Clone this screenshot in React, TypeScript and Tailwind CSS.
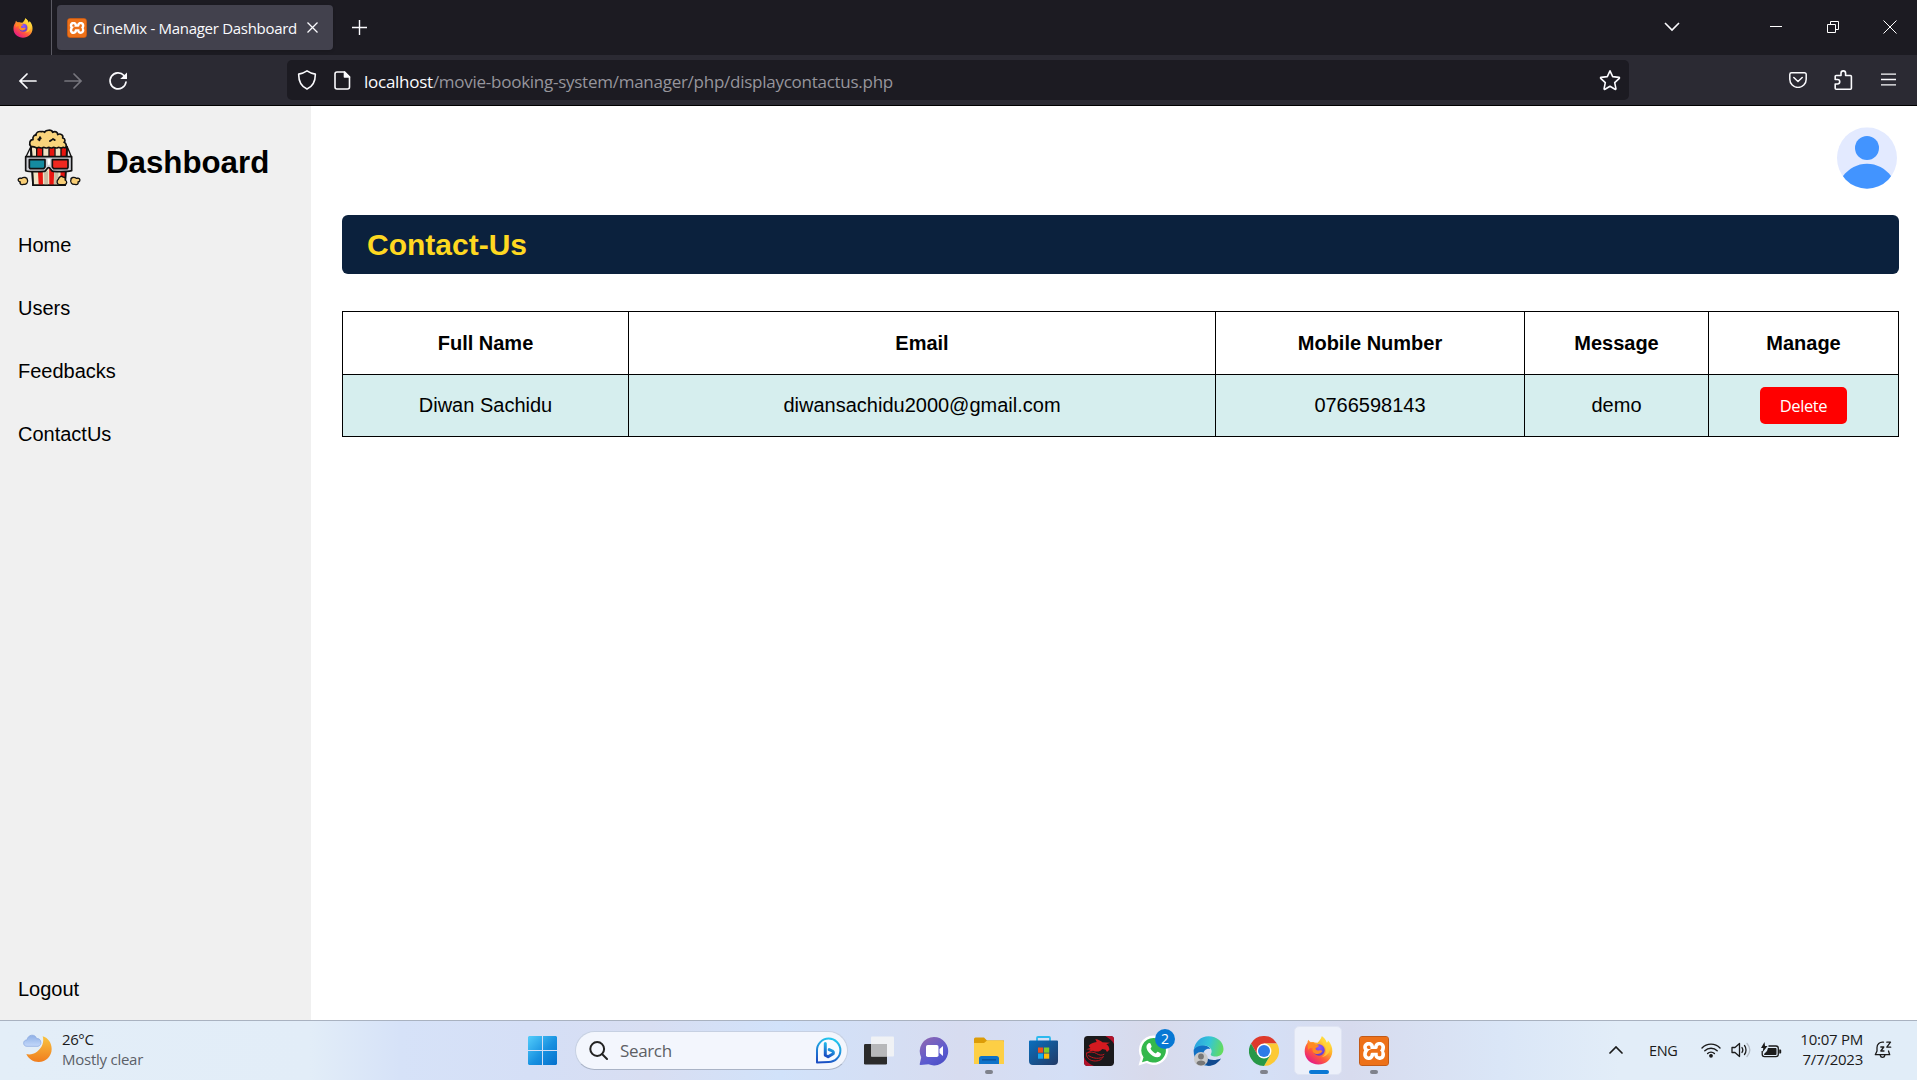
import type { ReactNode } from "react";
import { SiXampp } from "react-icons/si";

const UI = "font-['Open_Sans','Noto_Sans',sans-serif]";

function FirefoxIcon({ size, id }: { size: number; id: string }) {
  return (
    <svg width={size} height={size} viewBox="0 0 30 30" className="block shrink-0">
      <defs>
        <linearGradient id={id} x1="0.85" y1="0.05" x2="0.2" y2="0.95">
          <stop offset="0" stopColor="#fff44f" />
          <stop offset="0.35" stopColor="#ffb32b" />
          <stop offset="0.65" stopColor="#ff5a3c" />
          <stop offset="1" stopColor="#e5158a" />
        </linearGradient>
        <radialGradient id={id + "c"} cx="0.5" cy="0.3" r="0.7">
          <stop offset="0" stopColor="#9059ff" />
          <stop offset="1" stopColor="#5b3bd0" />
        </radialGradient>
      </defs>
      <path
        fill={`url(#${id})`}
        d="M18.500.3c2.500 2 4.500 4 5 6.700 1-.5 1.200-1.500 1.200-2.500C28 8 29.500 12 29.300 16 29 24 22.500 29.500 15 29.500S.7 24 .7 16C.7 12.500 1.600 9.500 3.600 7c0-1 .3-2 1-3 .6 1.200 1.400 2 2.600 2.500 1.300-.3 2.700-.2 3.800.2L14 7C15.500 5.500 17.500 3.500 18.500.3z"
      />
      <circle cx="15.500" cy="14.500" r="6" fill={`url(#${id}c)`} />
      <path fill="#ff8a24" d="M4 9c3-3 7-2 8 0l3.500.7c-.3 1.500-3 2-3.500 3-.2 1.500 1 2.500 3 2.300 2-.3 3-.4 4 .4-1 2-3 3-5 3.200-4 .2-6-3-5-6.500C6 12 5 13 4 15z" />
      <path fill="#ffd53a" fillOpacity="0.75" d="M18.500.3c-1.500 4.700 1.500 7.700 3.500 10.700 2 4 0 9-4 11 6-1 9-5 9-10 0-2-1-4-2.300-5.500 0 1-.4 1.800-1.200 2.200C23 5 22 3 18.500.3z" />
    </svg>
  );
}

function XamppIcon({ size }: { size: number }) {
  return (
    <span
      className="relative flex shrink-0 items-center justify-center overflow-hidden rounded-[3px] border border-[#c35a17] bg-[linear-gradient(#ec7a2e_0_18%,#fff_18%_82%,#ee6f18_82%)]"
      style={{ width: size, height: size }}
    >
      <SiXampp size={size} className="shrink-0 text-[#ed7119]" />
    </span>
  );
}

function Popcorn() {
  return (
    <svg width="64" height="57" viewBox="52 87 192 171" className="-ml-px block shrink-0">
      <g stroke="#111" strokeWidth="5" strokeLinejoin="round" strokeLinecap="round">
        <path fill="#efe2c4" d="M94 140h108l-6 116h-96z" />
        <path stroke="none" fill="#e8150f" d="M111 142h17l2 112h-13zM148 142h18l-4 112h-13zM184 142h16l-5 112h-13z" />
        <path fill="#c9bda3" stroke="none" d="M133 214h12v40h-11zM164 214h12v40h-13z" />
        <path fill="none" d="M94 140l6 116h96l6-116" />
        <path
          fill="#f9d47c"
          d="M94 140c-8-8-3-22 6-21-2-10 5-15 9-13-1-9 8-13 16-11 5-1 8-1 10 2 2-8 22-9 24 0 6-5 16-1 15 7 8-5 18 1 15 10 10 2 7 11 4 13 9 3 7 12 5 16-4 2-7-4-10 0-5 4-9-4-14 0-5 4-10-4-15 0-5 4-10-4-15 0-5 4-10-4-15 0-5 4-10-4-15 0-4 4-8-6-20-3z"
        />
        <path fill="none" d="M94 143v25M111 143v25M129 143v25M148 143v25M166 143v25M184 143v25M201 143v25M92 143l-13 27M204 143l11 27" strokeWidth="4" />
        <path fill="none" strokeWidth="6" d="M116 118l7-3M121 112l-2 9M151 123l5-3M160 117l5 3" />
        <path fill="#cfd0d6" d="M78 170h138v42c-16 4-36 3-56 2-6 0-7-11-13-11s-7 11-13 11c-20 1-44 2-56-2z" />
        <path fill="#158ba0" d="M89 179h47v22l-4 5H91l-2-4z" />
        <path fill="#ef2820" d="M158 179h47v23l-2 4h-41l-4-5z" />
        <path fill="#fff" stroke="none" d="M143 176h9l-2 18h-5z" />
        <path fill="#f9cf77" strokeWidth="4" d="M57 236c4-4 7 0 9-1 6-5 17-3 17 4 4 7-3 16-12 14-8 3-12-3-9-7-6-1-8-6-5-10zM239 236c-4-4-7 0-9-1-6-5-17-3-16 4-4 7 3 16 12 14 8 3 11-3 9-7 6-1 7-6 4-10zM176 238c2-7 9-12 14-7 7 0 8 7 6 9 8 4 6 12-1 14h-16c-9-2-8-12-3-16z" />
      </g>
    </svg>
  );
}

function WindowTabs() {
  return (
    <div className="flex h-[55px] bg-[#1c1b22] text-[#fbfbfe]">
      <div className="flex w-[52px] items-center border-r border-[#5b5a63] pl-[13px]">
        <FirefoxIcon size={20} id="ffTab" />
      </div>
      <div className="ml-[5px] mt-[5px] flex h-[45px] w-[276px] items-center rounded-[4px] bg-[#42414d] pl-[10px] shadow">
        <XamppIcon size={20} />
        <span className="ml-[6px] mt-px w-[205px] whitespace-nowrap text-[15px] tracking-[-0.3px]">CineMix - Manager Dashboard</span>
        <svg width="11" height="11" viewBox="0 0 11 11" className="ml-[9px]" fill="none" stroke="#fbfbfe" strokeWidth="1.300">
          <path d="M.5.5l10 10M10.500.5l-10 10" />
        </svg>
      </div>
      <svg width="15" height="15" viewBox="0 0 15 15" className="ml-[19px] mt-[20px]" fill="none" stroke="#fbfbfe" strokeWidth="1.400">
        <path d="M7.500 0v15M0 7.500h15" />
      </svg>
      <div className="mr-[20px] flex flex-1 items-start justify-end pt-[20px]">
        <svg width="16" height="10" viewBox="0 0 16 10" className="mt-[2px]" fill="none" stroke="#fbfbfe" strokeWidth="1.600">
          <path d="M1 1l7 7 7-7" />
        </svg>
        <svg width="12" height="2" viewBox="0 0 12 2" className="ml-[90px] mt-[6px]">
          <path fill="#fff" d="M0 0h12v1H0z" />
        </svg>
        <svg width="13" height="13" viewBox="0 0 13 13" className="ml-[45px] mt-[1px]" fill="none" stroke="#fff">
          <path d="M.5 3.500h8v8h-8zM3.500 3.500v-3h8v8h-3" />
        </svg>
        <svg width="14" height="14" viewBox="0 0 14 14" className="ml-[43px]" fill="none" stroke="#fff">
          <path d="M.5.5l13 13M13.500.5l-13 13" />
        </svg>
      </div>
    </div>
  );
}

function Toolbar() {
  return (
    <div className="flex h-[51px] items-start border-b border-black bg-[#2b2a33] text-[#fbfbfe]">
      <svg width="110" height="20" viewBox="0 0 110 20" className="ml-[18px] mt-[16px]" fill="none" strokeWidth="1.700" strokeLinecap="round">
        <path stroke="#fbfbfe" d="M2 10h16M9 3l-7 7 7 7" />
        <path stroke="#77767e" d="M47 10h16M56 3l7 7-7 7" />
        <path stroke="#fbfbfe" d="M106 4.500A8 8 0 1 0 108 11" />
        <path fill="#fbfbfe" stroke="none" d="M109 1.500v6.500h-6.800z" />
      </svg>
      <div className="ml-[159px] mt-[5px] flex h-[40px] w-[1342px] items-center rounded-[5px] bg-[#1c1b22]">
        <svg width="20" height="20" viewBox="0 0 20 20" className="ml-[10px]" fill="none" stroke="#fbfbfe" strokeWidth="1.600" strokeLinejoin="round">
          <path d="M10 .9c2.500 1.700 5 2.700 8.300 3.200C18.500 11.500 16 16.500 10 19.100 4 16.500 1.500 11.500 1.700 4.100 5 3.600 7.500 2.600 10 .9z" />
        </svg>
        <svg width="17" height="19" viewBox="0 0 17 19" className="ml-[17px]" fill="none" stroke="#fbfbfe" strokeWidth="1.600" strokeLinejoin="round">
          <path d="M3 1h7.500L15.500 6v10a2 2 0 0 1-2 2H3a2 2 0 0 1-2-2V3a2 2 0 0 1 2-2z" />
          <path fill="#fbfbfe" d="M10.500 1v5h5z" />
        </svg>
        <span className="ml-[13px] mt-[3px] flex-1 whitespace-nowrap text-[17px] tracking-[-0.26px] text-[#96959c]">
          <span className="text-[#fbfbfe]">localhost</span>/movie-booking-system/manager/php/displaycontactus.php
        </span>
        <svg width="22" height="22" viewBox="0 0 22 22" className="mr-[8px]" fill="none" stroke="#fbfbfe" strokeWidth="1.600" strokeLinejoin="round">
          <path d="M11 1.800l2.700 5.800 6.300.8c.5.100.6.500.3.900l-4.600 4.300 1.200 6.100c0 .6-.4.800-.9.600L11 17.200l-5 3.100c-.5.200-.9 0-.9-.6l1.200-6.100L1.700 9.300c-.3-.4-.2-.8.3-.9l6.300-.8z" />
        </svg>
      </div>
      <div className="flex flex-1 items-start justify-end pr-[21px] pt-[15px]">
        <svg width="18" height="16" viewBox="0 0 18 16" className="mt-[2px]" fill="none" stroke="#fbfbfe" strokeWidth="1.500" strokeLinecap="round" strokeLinejoin="round">
          <path d="M2.500.8h13A1.700 1.700 0 0 1 17.200 2.500v4.700a8.200 8.200 0 0 1-16.400 0V2.500A1.700 1.700 0 0 1 2.500.8zM4.800 5.500L9 9.500l4.200-4" />
        </svg>
        <svg width="19" height="20" viewBox="0 0 19 20" className="ml-[27px]" fill="none" stroke="#fbfbfe" strokeWidth="1.600" strokeLinejoin="round">
          <path d="M7 5.500V3.200a2.300 2.300 0 0 1 4.600 0v2.300h4.800a1 1 0 0 1 1 1v11.700a1 1 0 0 1-1 1H2.200a1 1 0 0 1-1-1V14h2.300a2.200 2.200 0 0 0 0-4.500H1.200V6.500a1 1 0 0 1 1-1z" />
        </svg>
        <svg width="15" height="13" viewBox="0 0 15 13" className="ml-[28px] mt-[3px]" stroke="#fbfbfe" strokeWidth="1.300">
          <path d="M0 1.200h15M0 6.500h15M0 11.800h15" />
        </svg>
      </div>
    </div>
  );
}

function Sidebar() {
  return (
    <aside className="flex w-[311px] shrink-0 flex-col bg-[#f0f0f0] pl-[18px] text-[20px] leading-[23px] text-black">
      <div className="flex h-[108px] pt-[23px]">
        <Popcorn />
        <h1 className="ml-[25px] mt-[16px] text-[31.250px] font-bold leading-[36px]">Dashboard</h1>
      </div>
      <nav className="mt-[20px] flex flex-1 flex-col gap-[40px]">
        <a>Home</a>
        <a>Users</a>
        <a>Feedbacks</a>
        <a>ContactUs</a>
      </nav>
      <a className="mb-[19px]">Logout</a>
    </aside>
  );
}

function Avatar() {
  return (
    <svg width="60" height="62" viewBox="831 380 180 184" className="ml-auto mr-[20px] mt-[21px] block">
      <defs>
        <clipPath id="avatarClip">
          <ellipse cx="921" cy="472" rx="90" ry="92" />
        </clipPath>
      </defs>
      <g clipPath="url(#avatarClip)">
        <path fill="#e3eaff" d="M831 380h180v184H831z" />
        <circle cx="921" cy="442" r="36" fill="#4294ff" />
        <path fill="#4294ff" d="M849 526c18-23 43-37 72-37s55 14 72 37v50H849z" />
      </g>
    </svg>
  );
}

function Content() {
  return (
    <main className="flex-1 bg-white">
      <Avatar />
      <h2 className="ml-[31px] mr-[18px] mt-[26px] h-[59px] rounded-[6px] bg-[#0b213d] pl-[25px] text-[30px] font-bold leading-[59px] text-[#fed821]">Contact-Us</h2>
      <table className="ml-[31px] mt-[37px] w-[1557px] table-fixed border-collapse text-center text-[20px] leading-[23px] text-black">
        <colgroup>
          <col className="w-[286px]" />
          <col className="w-[587px]" />
          <col className="w-[309px]" />
          <col className="w-[184px]" />
          <col className="w-[190px]" />
        </colgroup>
        <thead>
          <tr className="h-[63px]">
            {["Full Name", "Email", "Mobile Number", "Message", "Manage"].map((h) => (
              <th key={h} className="border border-black font-bold">{h}</th>
            ))}
          </tr>
        </thead>
        <tbody>
          <tr className="h-[62px] bg-[#d6eeee]">
            {["Diwan Sachidu", "diwansachidu2000@gmail.com", "0766598143", "demo"].map((c) => (
              <td key={c} className="border border-black">{c}</td>
            ))}
            <td className="border border-black">
              <button className={`${UI} mx-auto flex h-[37px] w-[87px] items-center justify-center rounded-[5px] bg-[#ff0000] pb-px text-[16.500px] tracking-[-0.4px] text-white`}>
                Delete
              </button>
            </td>
          </tr>
        </tbody>
      </table>
    </main>
  );
}

function Slot({ children, running }: { children: ReactNode; running?: boolean }) {
  return (
    <div className="relative flex h-[59px] w-[55px] shrink-0 items-center justify-center">
      {children}
      {running && <span className="absolute bottom-[6px] h-[4px] w-[8px] rounded-full bg-[#7f828c]" />}
    </div>
  );
}

function Weather() {
  return (
    <div className="flex w-[528px] self-stretch pl-[23px]">
      <svg width="29" height="28" viewBox="68 220 87 84" className="mt-[13px]">
        <defs>
          <linearGradient id="moon" x1="0" y1="0" x2="0" y2="1">
            <stop offset="0" stopColor="#f9c440" />
            <stop offset="1" stopColor="#f07d1e" />
          </linearGradient>
          <linearGradient id="cloud" x1="0" y1="0" x2="0" y2="1">
            <stop offset="0" stopColor="#8fb0e6" />
            <stop offset="1" stopColor="#c3d8fa" />
          </linearGradient>
        </defs>
        <path fill="url(#moon)" d="M127 227c17 5 27 20 27 38 0 22-17 39-39 39-17 0-31-10-37-24 9 3 21 1 32-7 16-12 22-30 17-46z" />
        <path fill="url(#cloud)" stroke="#85a5de" strokeWidth="2" d="M80 257c-14 0-13-20 0-19 2-17 25-20 29-4 14-3 18 20 4 23z" />
      </svg>
      <div className="ml-[10px] mt-[8px] text-[15px] leading-[20px] text-[#1b1b1b]">
        <div className="tracking-[-0.4px]">26°C</div>
        <div className="whitespace-nowrap tracking-[-0.25px] text-[#5b6068]">Mostly clear</div>
      </div>
    </div>
  );
}

function SearchPill() {
  return (
    <div className="ml-[18px] flex h-[39px] w-[273px] items-center rounded-full border border-[#c6d0e2] border-b-[#a9b3c6] bg-[#f3f6fd]">
      <svg width="19" height="19" viewBox="0 0 19 19" className="ml-[13px]" fill="none" stroke="#222" strokeWidth="2" strokeLinecap="round">
        <circle cx="8.200" cy="8" r="6.900" />
        <path d="M13 13l5 5" />
      </svg>
      <span className="ml-[12px] flex-1 text-[17px] tracking-[-0.35px] text-[#5d5f64]">Search</span>
      <svg width="27" height="27" viewBox="0 0 27 27" className="mr-[5px]" fill="none">
        <defs>
          <linearGradient id="bing" x1="0.600" y1="0" x2="0.300" y2="1">
            <stop offset="0" stopColor="#22c7ee" />
            <stop offset="1" stopColor="#1b4fc4" />
          </linearGradient>
        </defs>
        <path fill="#f8fbff" stroke="url(#bing)" strokeWidth="2" strokeLinejoin="round" d="M2 25.500V13.500A11.700 11.700 0 1 1 13.700 25z" />
        <path stroke="url(#bing)" strokeWidth="3" strokeLinejoin="round" strokeLinecap="round" d="M10.300 6.500v11.800l2.800 1.500 5-3c.7-1 .2-2.200-.7-2.800l-3.200-1.400" />
      </svg>
    </div>
  );
}

function TaskIcons() {
  return (
    <div className="ml-[3px] flex">
      <Slot>
        <svg width="31" height="29" viewBox="0 0 31 29" className="block">
          <rect x="1" y="8" width="23" height="20.500" rx="1.300" fill="#2b2b2b" />
          <rect x="8" y=".5" width="23" height="20" rx="1" fill="#f1f2f4" fillOpacity=".95" />
          <path fill="#b7b8ba" d="M8 8h16v12.500H8z" />
        </svg>
      </Slot>
      <Slot>
        <svg width="30" height="30" viewBox="0 0 30 30">
          <defs>
            <linearGradient id="chat" x1="0" y1="0" x2=".7" y2="1">
              <stop offset="0" stopColor="#9468ae" />
              <stop offset=".7" stopColor="#5b5bd0" />
              <stop offset="1" stopColor="#4d4fc6" />
            </linearGradient>
          </defs>
          <path fill="url(#chat)" d="M15 1a14.200 14.200 0 1 1-5.500 27.300L1.500 29c-.8 0-1-.5-.8-1l1.500-6.500A14.200 14.200 0 0 1 15 1z" />
          <rect x="7" y="9" width="12.500" height="12" rx="1.800" fill="#fff" />
          <path fill="#fff" d="M20.500 13l3.500-3v10l-3.500-3z" />
        </svg>
      </Slot>
      <Slot running>
        <svg width="30" height="28" viewBox="0 0 30 28">
          <path fill="#dc9c08" d="M0 2a1.500 1.500 0 0 1 1.500-1.500H10L13 3.500h17V10H0z" />
          <path fill="#fdcf45" d="M0 6h10l3-2.500h15.500A1.500 1.500 0 0 1 30 5v22H0z" />
          <path fill="#0d72c9" d="M5 27v-5.500A2.500 2.500 0 0 1 7.500 19h15a2.500 2.500 0 0 1 2.500 2.500V27z" />
          <path fill="#0a4f96" d="M8 22.200h14v1.300H8z" />
        </svg>
      </Slot>
      <Slot>
        <svg width="29" height="29" viewBox="0 0 29 29">
          <defs>
            <linearGradient id="store" x1="0" y1="0" x2="1" y2="1">
              <stop offset="0" stopColor="#0a6fbe" />
              <stop offset="1" stopColor="#223a66" />
            </linearGradient>
          </defs>
          <path fill="none" stroke="#2cb9ee" strokeWidth="1.800" d="M8 6V2a1 1 0 0 1 1-1h11a1 1 0 0 1 1 1v4" />
          <path fill="url(#store)" d="M0 5.500a1 1 0 0 1 1-1h27a1 1 0 0 1 1 1V25a4 4 0 0 1-4 4H4a4 4 0 0 1-4-4z" />
          <path fill="#f1511b" d="M9 11.500h5.200v5.200H9z" />
          <path fill="#80cc28" d="M15 11.500h5.200v5.200H15z" />
          <path fill="#16a9ee" d="M9 17.500h5.200v5.200H9z" />
          <path fill="#fbbc09" d="M15 17.500h5.200v5.200H15z" />
        </svg>
      </Slot>
      <Slot>
        <svg width="30" height="30" viewBox="372 75 90 90">
          <rect x="372" y="75" width="90" height="90" rx="11" fill="#1b1a1c" />
          <path fill="#b3122b" d="M436 75h16a10 10 0 0 1 10 10v14c-4-9-14-16-26-24zM372 138c4 12 14 20 30 27h-19a11 11 0 0 1-11-11z" />
          <path fill="#d41a20" d="M386 104c6-6 14-10 24-11l-4-9c10 2 17 6 21 10l23 1-11 5c6 3 9 9 9 16l-7 7-4-7-10-2-6 5c-8 4-16 3-22 0l-15 4 8-7-13-1 12-4z" />
          <path fill="none" stroke="#c3161c" strokeWidth="3" strokeLinecap="round" d="M380 126c10-4 22-4 30 2 8 5 16 6 22 2M380 126c-4 12 8 24 26 24 14 0 22-6 24-14M386 134c12 8 26 10 38 6" />
        </svg>
      </Slot>
      <Slot>
        <svg width="31" height="31" viewBox="0 0 31 31">
          <path fill="#fff" d="M15.500.5a14.700 14.700 0 1 1-7 27.600L.5 30.500l2.300-8A14.700 14.700 0 0 1 15.500.5z" />
          <path fill="#34b84c" d="M15.500 3a12.300 12.300 0 1 1-6.300 22.800L4 27.200l1.500-5A12.300 12.300 0 0 1 15.500 3z" />
          <path fill="#fff" d="M10.500 8.200c.8-.6 1.700-.3 2 .4l1.100 2.700c.2.600-.9 1.700-1.100 2.100 1.300 2.400 3 4 5.400 5 .5-.3 1.300-1.800 1.900-1.600l2.800 1.400c1 .9-.4 3.400-1.900 3.900-6.500 1.200-13.800-7.600-12-11.700.4-1 1-1.700 1.800-2.200z" />
        </svg>
        <span className="absolute left-[29px] top-[8px] flex h-[20px] w-[20px] items-center justify-center rounded-full bg-[#0778d4] text-[14px] leading-none text-white">2</span>
      </Slot>
      <Slot>
        <svg width="31" height="30" viewBox="0 0 31 30">
          <defs>
            <linearGradient id="edgeA" x1="0" y1=".3" x2="1" y2=".5">
              <stop offset="0" stopColor="#2b9fe0" />
              <stop offset=".5" stopColor="#34c5d8" />
              <stop offset="1" stopColor="#64dc5c" />
            </linearGradient>
          </defs>
          <path fill="#1270c4" d="M.7 14c2-6 13-7 17-1-5-1-8 2.500-7.500 7C10 25 14 29 19 29.500 8 31.500 0 24 .7 14z" />
          <path fill="#114a8f" d="M11 16c0 7 8 10 17 6.500-3 5-8 7.500-13 7.200C10 28 8 20 11 16z" />
          <path fill="url(#edgeA)" d="M.7 14C2 5.500 8 .3 15.500.3 24 .3 30.500 6 30.500 13c0 5-3.500 7.500-8 7.500-3.500 0-5.500-1.300-4.500-2.800 2-3-.5-7.200-5-7.900C8 9 3 10.500.7 14z" />
          <circle cx="8" cy="23" r="7" fill="#c9c9c9" />
          <circle cx="8" cy="20.500" r="2.900" fill="#777" />
          <path fill="#777" d="M3.500 27.500c0-4 9-4 9 0-2 2.500-7 2.500-9 0z" />
        </svg>
      </Slot>
      <Slot running>
        <svg width="30" height="30" viewBox="0 0 30 30">
          <path fill="#de3a2c" d="M2 7.500A15 15 0 0 1 28 7.500H15L8.500 18.700z" />
          <path fill="#fcc934" d="M28 7.500A15 15 0 0 1 15 30l6.500-11.200L15 7.500z" />
          <path fill="#279847" d="M15 30A15 15 0 0 1 2 7.500l6.500 11.200h13z" />
          <circle cx="15" cy="15" r="7.400" fill="#fff" />
          <circle cx="15" cy="15" r="6" fill="#2c7be8" />
        </svg>
      </Slot>
      <Slot>
        <span className="absolute left-[3px] top-[5px] h-[49px] w-[48px] rounded-[5px] border border-[#dfe4f3] bg-[#ecf0fa]" />
        <span className="relative flex">
          <FirefoxIcon size={29} id="ffTask" />
        </span>
        <span className="absolute bottom-[6px] h-[4px] w-[20px] rounded-full bg-[#0a78d4]" />
      </Slot>
      <Slot running>
        <XamppIcon size={30} />
      </Slot>
    </div>
  );
}

function Tray() {
  return (
    <div className="ml-auto flex items-center pb-px pr-[25px] text-[15px] text-[#1b1b1b]">
      <svg width="14" height="8" viewBox="0 0 14 8" fill="none" stroke="#1b1b1b" strokeWidth="1.700" strokeLinecap="round">
        <path d="M1 7l6-6 6 6" />
      </svg>
      <span className="ml-[26px] mt-px w-[29px] whitespace-nowrap text-[14.500px] tracking-[-0.3px]">ENG</span>
      <svg width="20" height="16" viewBox="0 0 20 16" className="ml-[23px]" fill="none" stroke="#1b1b1b" strokeWidth="1.400" strokeLinecap="round">
        <path d="M1 6a12.500 12.500 0 0 1 18 0M3.800 8.800a8.700 8.700 0 0 1 12.400 0M6.600 11.500a4.800 4.800 0 0 1 6.800 0" />
        <circle cx="10" cy="13.800" r="1.200" fill="#1b1b1b" />
      </svg>
      <svg width="20" height="16" viewBox="0 0 20 16" className="ml-[10px]" fill="none" stroke="#1b1b1b" strokeWidth="1.300" strokeLinecap="round" strokeLinejoin="round">
        <path d="M1 5.500h3L8.500 1.500v13L4 10.500H1zM11 5.500c1 1.500 1 3.500 0 5M13.500 3.500c2 2.500 2 6.500 0 9" />
        <path stroke="#b4bcc6" d="M16 1.500c3.500 4 3.500 9 0 13" />
      </svg>
      <svg width="21" height="17" viewBox="0 0 21 17" className="ml-[10px]">
        <path fill="none" stroke="#1b1b1b" strokeWidth="1.300" d="M7.500 4H15a2.300 2.300 0 0 1 2.300 2.300v6A2.300 2.300 0 0 1 15 14.600H3.500A2.300 2.300 0 0 1 1.200 12.300V9" />
        <path fill="#1b1b1b" d="M7 6h7.500c.6 0 1 .4 1 1v5c0 .6-.4 1-1 1H4c-.6 0-1-.4-1-1l3-3zM18.200 7.500h1c.6 0 1 .4 1 1v2c0 .6-.4 1-1 1h-1zM3.500 0L0 6h2.300L1.500 10.500 6.500 4H4z" />
      </svg>
      <div className="-mt-[3px] ml-[15px] w-[66px] whitespace-nowrap text-right leading-[20px] tracking-[-0.25px]">
        <div>10:07 PM</div>
        <div>7/7/2023</div>
      </div>
      <svg width="18" height="18" viewBox="0 0 18 18" className="ml-[11px]" fill="none" stroke="#1b1b1b" strokeWidth="1.300" strokeLinecap="round" strokeLinejoin="round">
        <path d="M9.500 1.200C5.500.5 3 3.500 3 6.500V10l-1.700 3.700h14.400L14.500 10M6.300 14.500c.5 2.500 4 2.500 4.500 0M6.800 6h3l-3 4h3.200M12.800 1.200h3.700l-3.700 5h3.900" />
      </svg>
    </div>
  );
}

function Taskbar() {
  return (
    <footer className={`${UI} flex h-[60px] items-center border-t border-[#a9b2c0] bg-[linear-gradient(90deg,#e3eef8_0px,#e2edf8_310px,#d6e2f8_400px,#d5dff6_530px,#d8def2_650px,#d1e2fa_780px,#d7dcf0_960px,#d4dff6_1070px,#d8daeb_1150px,#d4e0f7_1250px,#d7dbee_1350px,#dae6f7_1500px,#e2edf8_1620px,#e1edf8_1917px)]`}>
      <Weather />
      <svg width="29" height="29" viewBox="0 0 29 29" className="shrink-0">
        <defs>
          <linearGradient id="win" x1="0" y1="0" x2="29" y2="29" gradientUnits="userSpaceOnUse">
            <stop offset="0" stopColor="#53cdfb" />
            <stop offset=".55" stopColor="#1790e0" />
            <stop offset="1" stopColor="#0570cc" />
          </linearGradient>
        </defs>
        <path fill="url(#win)" d="M1 0h13v14H0V1zM15 0h13l1 1v13H15zM0 15h14v14H1l-1-1zM15 15h14v13l-1 1H15z" />
      </svg>
      <SearchPill />
      <TaskIcons />
      <Tray />
    </footer>
  );
}

export default function App() {
  return (
    <div className="flex h-[1080px] w-[1917px] flex-col overflow-hidden bg-white">
      <header className={UI}>
        <WindowTabs />
        <Toolbar />
      </header>
      <div className="flex min-h-0 flex-1 font-['Liberation_Sans',Arial,sans-serif]">
        <Sidebar />
        <Content />
      </div>
      <Taskbar />
    </div>
  );
}
